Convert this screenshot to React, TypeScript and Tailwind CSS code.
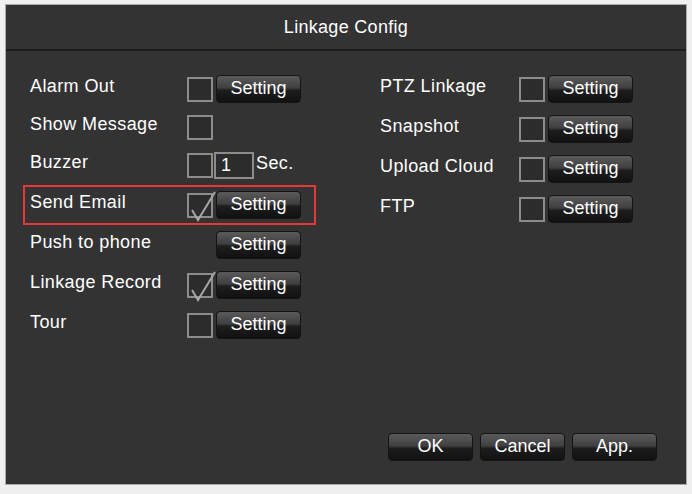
import React from "react";

const font = "font-['Liberation_Sans',Arial,sans-serif]";

function Check({ checked = false }: { checked?: boolean }) {
  return (
    <div className="relative w-[26px] h-[25px] shrink-0 border-2 border-[#8c8c8c] bg-[#2c2c2c]">
      {checked && (
        <svg
          className="absolute left-[-2px] top-[-5px] overflow-visible"
          width="30"
          height="32"
          viewBox="0 0 30 32"
          fill="none"
        >
          <path
            d="M5 20 L11 30 L28 2"
            stroke="#a6a6a6"
            strokeWidth="2"
            strokeLinejoin="miter"
          />
        </svg>
      )}
    </div>
  );
}

function Btn({ children }: { children: React.ReactNode }) {
  return (
    <div className="flex items-center justify-center w-[85px] h-[28px] shrink-0 rounded-[4px] border border-[#141414] bg-[linear-gradient(to_bottom,#5a5a5a_0%,#404040_45%,#1d1d1d_55%,#111111_100%)] text-[18px] text-white pb-[2px]">
      {children}
    </div>
  );
}

function Row({
  label,
  labelW,
  h = "h-[40px]",
  highlight = false,
  children,
}: {
  label: string;
  labelW: string;
  h?: string;
  highlight?: boolean;
  children?: React.ReactNode;
}) {
  return (
    <div
      className={`flex items-center ${h} border-2 pl-[5px] ${
        highlight ? "border-[#e8373a]" : "border-transparent"
      }`}
    >
      <div className={`${labelW} shrink-0 text-[18px] tracking-[0.4px] mb-[6px] text-white`}>
        {label}
      </div>
      <div className="flex items-center gap-[3px]">{children}</div>
    </div>
  );
}

export default function App() {
  return (
    <div className={`w-[692px] h-[494px] bg-[#f0f0f0] pt-[4px] pl-[5px] ${font}`}>
      <div className="flex flex-col w-[682px] h-[481px] border border-[#a9a9a9] bg-[#333333]">
        {/* Title */}
        <div className="flex items-center justify-center h-[46px] border-b-2 border-[#1c1c1c] text-[18px] tracking-[0.3px] text-white">
          Linkage Config
        </div>

        {/* Options */}
        <div className="flex-1 flex gap-[57px] pt-[18px] pl-[17px]">
          <div className="w-[293px] flex flex-col">
            <Row label="Alarm Out" labelW="w-[157px]">
              <Check />
              <Btn>Setting</Btn>
            </Row>
            <Row label="Show Message" labelW="w-[157px]" h="h-[36px]">
              <Check />
            </Row>
            <Row label="Buzzer" labelW="w-[157px]">
              <Check />
              <div className="flex items-center">
                <div className="w-[40px] h-[27px] ml-[-2px] border-2 border-[#8c8c8c] bg-[#2c2c2c] pl-[5px] text-[18px] leading-[22px] text-white">
                  1
                </div>
                <span className="ml-[2px] mb-[4px] text-[18px] tracking-[0.4px] text-white">Sec.</span>
              </div>
            </Row>
            <Row label="Send Email" labelW="w-[157px]" highlight>
              <Check checked />
              <Btn>Setting</Btn>
            </Row>
            <Row label="Push to phone" labelW="w-[186px]">
              <Btn>Setting</Btn>
            </Row>
            <Row label="Linkage Record" labelW="w-[157px]">
              <Check checked />
              <Btn>Setting</Btn>
            </Row>
            <Row label="Tour" labelW="w-[157px]">
              <Check />
              <Btn>Setting</Btn>
            </Row>
          </div>

          <div className="w-[280px] flex flex-col">
            <Row label="PTZ Linkage" labelW="w-[139px]">
              <Check />
              <Btn>Setting</Btn>
            </Row>
            <Row label="Snapshot" labelW="w-[139px]">
              <Check />
              <Btn>Setting</Btn>
            </Row>
            <Row label="Upload Cloud" labelW="w-[139px]">
              <Check />
              <Btn>Setting</Btn>
            </Row>
            <Row label="FTP" labelW="w-[139px]">
              <Check />
              <Btn>Setting</Btn>
            </Row>
          </div>
        </div>

        {/* Footer */}
        <div className="flex justify-end gap-[7px] pr-[29px] pb-[23px]">
          <Btn>OK</Btn>
          <Btn>Cancel</Btn>
          <Btn>App.</Btn>
        </div>
      </div>
    </div>
  );
}
